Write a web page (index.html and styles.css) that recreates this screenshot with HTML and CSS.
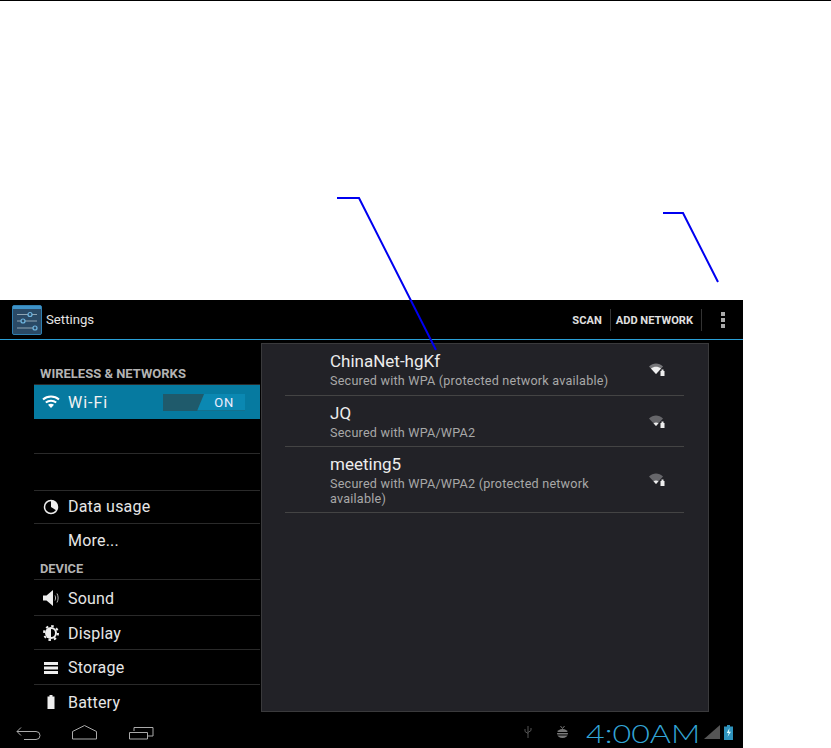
FILE: index.html
```html
<!DOCTYPE html>
<html lang="en">

<head>
    <meta charset="UTF-8">
    <title>Wi-Fi Settings</title>
    <link rel="stylesheet" href="styles.css">
</head>

<body>
    <div class="page">
        <div class="top-rule"></div>

        <!-- Tablet screenshot -->
        <div class="tablet">
            <div class="action-bar">
                <svg class="app-icon" width="30" height="30" viewBox="0 0 30 30">
                    <rect x="0.5" y="0.5" width="29" height="29" rx="1.5" fill="#2a4a66" stroke="#2f7fb0" />
                    <rect x="1" y="1" width="28" height="3" fill="#3f93c8" />
                    <path d="M5 9.5h20M5 16h20M5 23h20" stroke="#8fa4b2" stroke-width="1" />
                    <circle cx="18" cy="9.5" r="2" fill="#2a4a66" stroke="#6fb6e0" stroke-width="1.2" />
                    <circle cx="11" cy="16" r="2" fill="#2a4a66" stroke="#6fb6e0" stroke-width="1.2" />
                    <circle cx="23" cy="23" r="2" fill="#2a4a66" stroke="#6fb6e0" stroke-width="1.2" />
                </svg>
                <span class="app-title">Settings</span>
                <div class="actions">
                    <span class="action action-scan">SCAN</span>
                    <span class="action action-add">ADD NETWORK</span>
                    <span class="overflow"><i></i><i></i><i></i></span>
                </div>
            </div>

            <div class="content">
                <!-- Left settings list -->
                <div class="sidebar">
                    <div class="section section-first">WIRELESS &amp; NETWORKS</div>
                    <div class="row row-wifi">
                        <svg class="row-icon" width="18" height="14" viewBox="0 0 18 14">
                            <path d="M1 4.5C5.5.5 12.5.5 17 4.5" fill="none" stroke="#fff" stroke-width="2" />
                            <path d="M3.8 7.5C6.8 5 11.2 5 14.2 7.5" fill="none" stroke="#fff" stroke-width="2" />
                            <path d="M6 9.7C8 8.4 10 8.4 12 9.7L9 13z" fill="#fff" />
                        </svg>
                        <span class="wifi-label">Wi-Fi</span>
                        <div class="toggle"><span class="toggle-off"></span><span class="toggle-on">ON</span></div>
                    </div>
                    <div class="row row-blank"></div>
                    <div class="row row-blank-tall"></div>
                    <div class="row row-data">
                        <svg class="row-icon" width="16" height="16" viewBox="0 0 16 16">
                            <circle cx="8" cy="8" r="6.5" fill="none" stroke="#eee" stroke-width="1.5" />
                            <path d="M8 1.5A6.5 6.5 0 0 1 13.5 11.5L8 8z" fill="#eee" />
                        </svg>
                        <span>Data usage</span>
                    </div>
                    <div class="row row-more"><span>More...</span></div>
                    <div class="section section-device">DEVICE</div>
                    <div class="row row-sound">
                        <svg class="row-icon" width="16" height="16" viewBox="0 0 16 16">
                            <path d="M0 5.5h3.5L10 0v16L3.5 10.5H0z" fill="#eee" />
                            <path d="M12 5.5c.8 1.700.8 3.300 0 5M14 3.500c1.500 3 1.500 6 0 9" fill="none" stroke="#bbb" />
                        </svg>
                        <span>Sound</span>
                    </div>
                    <div class="row row-display">
                        <svg class="row-icon" width="16" height="16" viewBox="0 0 16 16">
                            <circle cx="8" cy="8" r="6" fill="#eee" />
                            <circle cx="8" cy="8" r="7" fill="none" stroke="#eee" stroke-width="2" stroke-dasharray="2.5 3" />
                            <path d="M8 4a4 4 0 0 1 0 8z" fill="#000" />
                        </svg>
                        <span>Display</span>
                    </div>
                    <div class="row row-storage">
                        <svg class="row-icon" width="16" height="14" viewBox="0 0 16 14">
                            <path d="M1 1h14v3H1zM1 5.5h14v3H1zM1 10h14v3H1z" fill="#eee" />
                        </svg>
                        <span>Storage</span>
                    </div>
                    <div class="row row-battery">
                        <svg class="row-icon" width="16" height="16" viewBox="0 0 16 16">
                            <path d="M6.5 1h3v1.500h2V15h-7V2.500h2z" fill="#eee" />
                        </svg>
                        <span>Battery</span>
                    </div>
                </div>

                <!-- Network list -->
                <div class="panel">
                    <div class="network net-first">
                        <div class="net-text">
                            <div class="net-name">ChinaNet-hgKf</div>
                            <div class="net-sub">Secured with WPA (protected network available)</div>
                        </div>
                        <svg class="signal" width="16" height="13" viewBox="0 0 16 13">
                            <path d="M0 3.5C4-.5 10-.5 14 3.5L7 11z" fill="#77777a" />
                            <path d="M2 5.5C5 3 9 3 12 5.5L7 11z" fill="#f0f0f0" />
                            <path d="M11.5 8h4v5h-4zM12.5 8V6.500h2V8" fill="#eee" />
                        </svg>
                    </div>
                    <div class="network net-second">
                        <div class="net-text">
                            <div class="net-name">JQ</div>
                            <div class="net-sub">Secured with WPA/WPA2</div>
                        </div>
                        <svg class="signal" width="16" height="13" viewBox="0 0 16 13">
                            <path d="M0 3.5C4-.5 10-.5 14 3.5L7 11z" fill="#66666a" />
                            <path d="M4.5 8.2C6 7.2 8 7.2 9.5 8.2L7 11z" fill="#eee" />
                            <path d="M11.5 8h4v5h-4zM12.5 8V6.500h2V8" fill="#eee" />
                        </svg>
                    </div>
                    <div class="network net-third">
                        <div class="net-text">
                            <div class="net-name">meeting5</div>
                            <div class="net-sub">Secured with WPA/WPA2 (protected network available)</div>
                        </div>
                        <svg class="signal" width="16" height="13" viewBox="0 0 16 13">
                            <path d="M0 3.5C4-.5 10-.5 14 3.5L7 11z" fill="#66666a" />
                            <path d="M4.5 8.2C6 7.2 8 7.2 9.5 8.2L7 11z" fill="#eee" />
                            <path d="M11.5 8h4v5h-4zM12.5 8V6.500h2V8" fill="#eee" />
                        </svg>
                    </div>
                </div>
            </div>

            <!-- System bar -->
            <div class="nav-bar">
                <svg class="nav-keys" width="140" height="20" viewBox="0 0 140 20">
                    <path d="M1 10.5H20a4 4 0 0 1 0 8H8M5 6.500L1 10.500L5 14.500" fill="none" stroke="#aaa" />
                    <path d="M56.5 10.5L68.5 4.5L80.5 10.5V18H56.5z" fill="none" stroke="#aaa" />
                    <path d="M113.5 11.5h18V18h-18zM118 10V6.500h19V15h-5" fill="none" stroke="#aaa" />
                </svg>
                <div class="tray">
                    <svg class="tray-usb" width="8" height="12" viewBox="0 0 8 12">
                        <path d="M4 0v12M1 3v2.500l3 2M7 2v2.500L4 6.500" fill="none" stroke="#555" />
                    </svg>
                    <svg class="tray-bug" width="13" height="13" viewBox="0 0 13 13">
                        <ellipse cx="6.5" cy="7.5" rx="5.5" ry="4.5" fill="#777" />
                        <path d="M0 6.5h13M1 9h11" stroke="#000" />
                        <path d="M4.5 0l2 2.500 2-2.500" fill="none" stroke="#777" />
                    </svg>
                    <span class="clock">4:00AM</span>
                    <svg class="tray-signal" width="16" height="14" viewBox="0 0 16 14">
                        <path d="M16 0v14H0z" fill="#555" />
                    </svg>
                    <svg class="tray-battery" width="9" height="15" viewBox="0 0 9 15">
                        <path d="M3 0h3v1.500h3V15H0V1.500h3z" fill="#2f93bd" />
                        <path d="M5.5 3L2.800 8h2l-1.300 4L7 6.800H5z" fill="#dff" />
                    </svg>
                </div>
            </div>
        </div>

        <!-- Callout lines over the screenshot -->
        <svg class="callouts" width="831" height="748" viewBox="0 0 831 748">
            <path d="M337 198H359L436 350M663 213H683L718 282" fill="none" stroke="#0000f0" stroke-width="2" />
        </svg>
    </div>
</body>

</html>
```

FILE: styles.css
```css
body {
    margin: 0;
    background: #fff;
    font-family: Roboto, "Liberation Sans", sans-serif;
}

.page {
    position: relative;
    width: 831px;
    height: 748px;
    overflow: hidden;
}

.top-rule {
    height: 1px;
    background: #000;
}

.callouts {
    position: absolute;
    left: 0;
    top: 0;
}

.tablet {
    margin-top: 299px;
    width: 743px;
    height: 448px;
    background: #000;
    display: flex;
    flex-direction: column;
}

/* Action bar */
.action-bar {
    height: 39px;
    border-bottom: 1px solid #2a9fd6;
    display: flex;
    align-items: center;
    padding-left: 12px;
    flex-shrink: 0;
}

.app-icon {
    margin-right: 4px;
}

.app-title {
    color: #e4e4e4;
    font-size: 13.2px;
}

.actions {
    margin-left: auto;
    display: flex;
    align-items: center;
    color: #e0e0e0;
    font-size: 11.1px;
    font-weight: 700;
    height: 100%;
}

.action {
    display: flex;
    align-items: center;
    height: 21px;
    padding-top: 1px;
}

.action-scan {
    padding-right: 8px;
    border-right: 1px solid #333;
}

.action-add {
    padding-left: 5px;
    padding-right: 8px;
    border-right: 1px solid #333;
}

.overflow {
    width: 41px;
    display: flex;
    flex-direction: column;
    align-items: center;
    gap: 2px;
}

.overflow i {
    width: 4px;
    height: 4px;
    background: #aaa;
}

/* Main area */
.content {
    flex: 1;
    display: flex;
    min-height: 0;
}

.sidebar {
    width: 226px;
    margin-left: 34px;
    margin-right: 1px;
    flex-shrink: 0;
    overflow: hidden;
}

.section {
    color: #b3b3b3;
    font-size: 13px;
    font-weight: 700;
    padding-left: 6px;
    border-bottom: 1px solid #2a2a2a;
    box-sizing: border-box;
}

.section-first {
    height: 45px;
    line-height: 14px;
    padding-top: 27px;
}

.section-device {
    height: 18px;
    line-height: 14px;
    font-size: 12.8px;
}

.row {
    display: flex;
    align-items: center;
    padding-left: 8px;
    color: #e6e6e6;
    font-size: 16px;
    letter-spacing: 0.2px;
    border-bottom: 1px solid #2a2a2a;
    box-sizing: border-box;
}

.row-icon {
    width: 18px;
    margin-right: 8px;
    flex-shrink: 0;
}

.row-wifi {
    height: 34px;
    background: #067aa0;
    color: #f2f2f2;
    border-bottom: 0;
}

.wifi-label {
    letter-spacing: 1px;
}

.toggle {
    margin-left: 55px;
    width: 82px;
    height: 17px;
    display: flex;
    background: #1f5a6b;
    font-size: 13px;
    letter-spacing: 1px;
}

.toggle-off {
    width: 34px;
}

.toggle-on {
    flex: 1;
    background: #0b88b2;
    clip-path: polygon(7px 0, 100% 0, 100% 100%, 0 100%);
    color: #eef;
    text-align: center;
    line-height: 17px;
    padding-left: 6px;
}

.row-blank {
    height: 35px;
}

.row-blank-tall {
    height: 37px;
}

.row-data {
    height: 33px;
    padding-bottom: 1px;
}

.row-more {
    height: 38px;
    padding-left: 34px;
    padding-bottom: 5px;
    border-bottom: 0;
}

.row-sound {
    height: 36px;
    padding-top: 1px;
}

.row-display {
    height: 34px;
    padding-top: 1px;
}

.row-storage {
    height: 35px;
    padding-top: 1px;
}

.row-battery {
    height: 34px;
    border-bottom: 0;
}

/* Network panel */
.panel {
    margin-top: 3px;
    width: 448px;
    height: 369px;
    box-sizing: border-box;
    background: #222227;
    border: 1px solid #3a3a3c;
    padding: 0 24px 0 23px;
}

.network {
    display: flex;
    align-items: center;
    padding-left: 45px;
    padding-right: 19px;
    border-bottom: 1px solid #444;
    box-sizing: border-box;
}

.net-first {
    height: 52px;
}

.net-second {
    height: 51px;
}

.net-third {
    height: 66px;
}

.net-text {
    flex: 1;
    min-width: 0;
    padding-right: 28px;
}

.net-name {
    color: #ececec;
    font-size: 17px;
    line-height: 20px;
}

.net-sub {
    margin-top: 2px;
    color: #a8a8a8;
    font-size: 12.6px;
    line-height: 15px;
    letter-spacing: 0.22px;
}

/* System bar */
.nav-bar {
    height: 36px;
    flex-shrink: 0;
    display: flex;
    align-items: center;
    padding-left: 16px;
}

.nav-keys {
    margin-top: 2px;
}

.tray {
    margin-left: auto;
    display: flex;
    align-items: center;
    padding-right: 10px;
    padding-top: 4px;
}

.tray-usb {
    margin-right: 24px;
}

.tray-bug {
    margin-right: 17px;
}

/* The clock font on the device is wider than anything installed */
.clock {
    display: block;
    width: 113px;
    color: #33a5d6;
    font-size: 25px;
    font-weight: 300;
    font-family: Lato, Roboto, sans-serif;
    line-height: 30px;
    white-space: nowrap;
    transform: scaleX(1.29);
    transform-origin: left center;
    margin-top: 2px;
}

.tray-signal {
    margin-left: 5px;
    margin-right: 4px;
}
```
